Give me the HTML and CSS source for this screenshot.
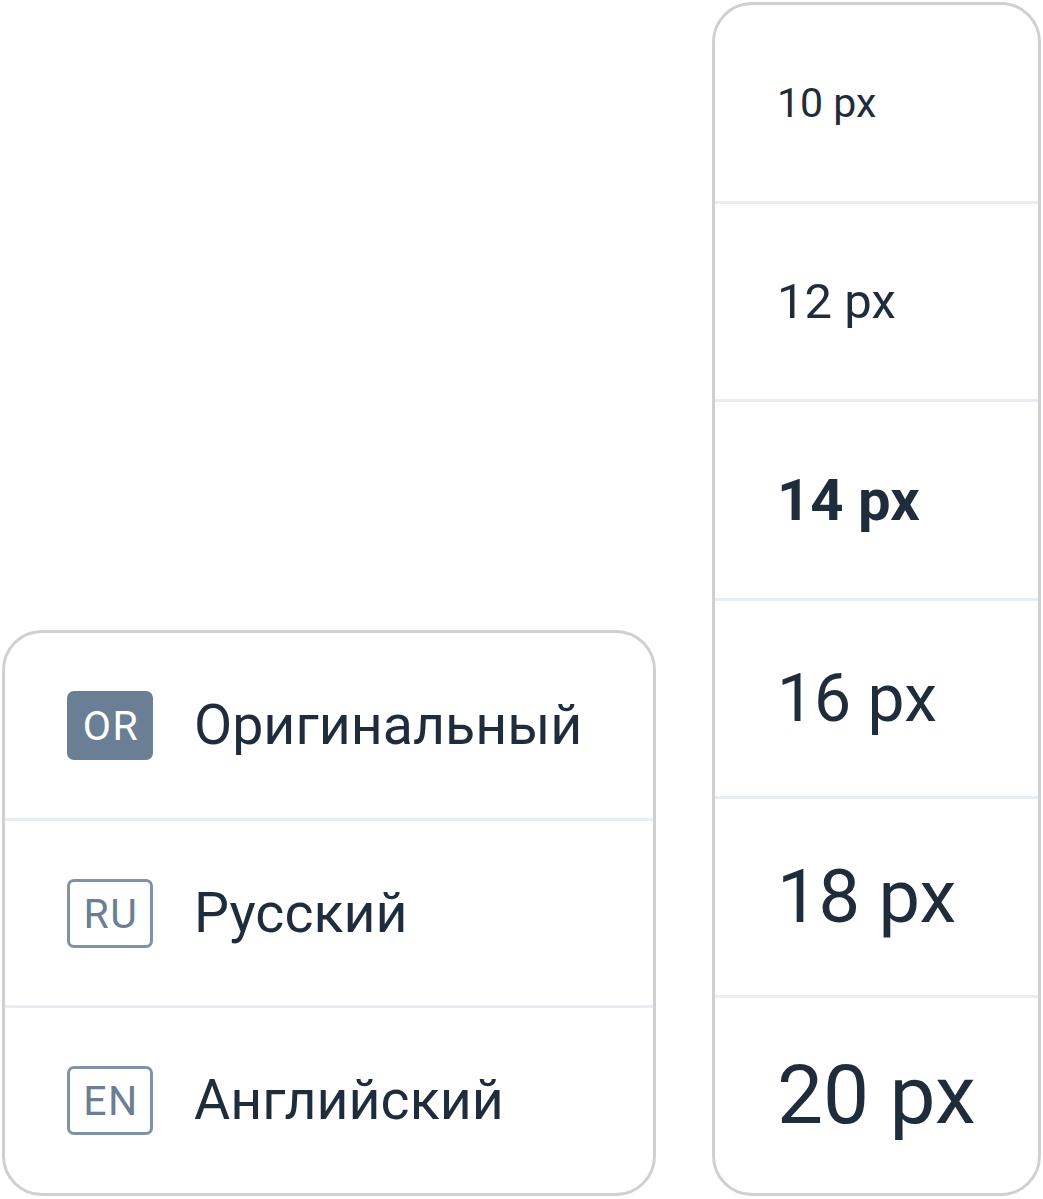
FILE: index.html
```html
<!DOCTYPE html>
<html>
<head>
<meta charset="utf-8">
<link rel="stylesheet" href="styles.css">
</head>
<body>
<div class="wrap">
  <div class="panel lang">
    <div class="row"><span class="badge filled">OR</span><span class="label">Оригинальный</span></div>
    <div class="row"><span class="badge">RU</span><span class="label">Русский</span></div>
    <div class="row"><span class="badge">EN</span><span class="label">Английский</span></div>
  </div>
  <div class="panel sizes">
    <div class="row s10">10 px</div>
    <div class="row s12">12 px</div>
    <div class="row s14 active">14 px</div>
    <div class="row s16">16 px</div>
    <div class="row s18">18 px</div>
    <div class="row s20">20 px</div>
  </div>
</div>
</body>
</html>
```
FILE: styles.css
```css
html, body { margin: 0; padding: 0; background: #fff; }
body { padding: 2px; font-family: Roboto, "Noto Sans", sans-serif; color: #1f2c3b; }
.wrap { display: flex; align-items: flex-end; gap: 56px; }
.panel {
  border: 3px solid #d0d0d0;
  border-radius: 40px;
  display: flex;
  flex-direction: column;
  overflow: hidden;
  background: #fff;
}
.panel .row { flex: 1; display: flex; align-items: center; border-bottom: 3px solid #e8edf3; }
.panel .row:last-child { border-bottom: none; }
.lang { width: 648px; height: 560px; }
.lang .row { padding-left: 62px; gap: 41px; }
.badge {
  width: 86px; height: 69px; box-sizing: border-box;
  border: 3px solid #7f92a7; border-radius: 7px;
  display: flex; align-items: center; justify-content: center;
  font-size: 41px; font-weight: 400; color: #6a7f95; letter-spacing: 1.5px;
  padding-left: 2px; padding-top: 1px;
}
.badge.filled { background: #6a7f95; border-color: #6a7f95; color: #fff; }
.label { font-size: 55.5px; }
.sizes { width: 323px; height: 1188px; }
.sizes .row { padding-left: 62px; }
.s10 { font-size: 41px; }
.s12 { font-size: 49px; }
.s14 { font-size: 58px; font-weight: 700; }
.s16 { font-size: 66px; }
.s18 { font-size: 74px; }
.s20 { font-size: 82px; }
```
